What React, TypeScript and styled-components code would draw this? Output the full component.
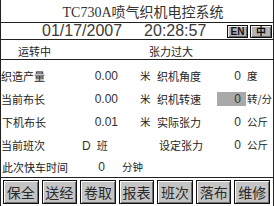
import React from 'react';
import styled, { createGlobalStyle } from 'styled-components';

const Global = createGlobalStyle`
  html, body { margin: 0; padding: 0; background: #fff; }
  body { font-family: "Liberation Sans", "Noto Sans CJK SC", sans-serif; }
`;

const Screen = styled.div`
  width: 274px;
  height: 206px;
  box-sizing: border-box;
  border-left: 1px solid #222;
  border-right: 1px solid #222;
  display: flex;
  flex-direction: column;
  overflow: hidden;
  color: #222;
  background: #fff;
`;

const TitleBar = styled.div`
  height: 22px;
  flex: none;
  border-bottom: 1px solid #222;
  display: flex;
  align-items: center;
  justify-content: center;
  padding-left: 12px;
  font-family: "Liberation Serif", "Noto Sans CJK SC", serif;
  font-size: 14px;
  font-weight: normal;
  color: #333;
`;

const DateRow = styled.div`
  height: 16px;
  flex: none;
  border-bottom: 1px solid #222;
  display: flex;
  align-items: center;
  padding-left: 41px;
  padding-right: 1px;
`;

const Clock = styled.span<{ $gap?: number }>`
  font-family: "Liberation Sans", sans-serif;
  font-size: 16px;
  line-height: 16px;
  color: #3a3a3a;
  margin-left: ${p => p.$gap ?? 0}px;
`;

const LangGroup = styled.div`
  margin-left: auto;
  display: flex;
  gap: 2px;
`;

const LangButton = styled.button<{ $w: number }>`
  width: ${p => p.$w}px;
  height: 13px;
  padding: 0;
  border: 1px solid #111;
  background: #b4b4b4;
  box-shadow: inset 1px 1px 0 #eee, inset -1px -1px 0 #666;
  font-family: "Liberation Sans", "Noto Sans CJK SC", sans-serif;
  font-size: 10px;
  font-weight: bold;
  line-height: 11px;
  color: #111;
  display: flex;
  align-items: center;
  justify-content: center;
`;

const StatusRow = styled.div`
  height: 17px;
  padding-top: 2px;
  flex: none;
  border-bottom: 1px solid #222;
  display: grid;
  grid-template-columns: 131px 1fr;
  align-items: center;
  padding-left: 17px;
  font-family: "Noto Sans CJK SC", sans-serif;
  font-size: 11px;
`;

const DataArea = styled.div`
  padding-top: 4px;
  flex: none;
  display: flex;
  flex-direction: column;
`;

const Row = styled.div<{ $h?: number }>`
  height: ${p => p.$h ?? 23}px;
  display: grid;
  grid-template-columns: 77px 40px 39px 60px 29px 1fr;
  align-items: center;
  font-family: "Noto Sans CJK SC", sans-serif;
  font-size: 11px;
  color: #222;
  white-space: nowrap;
`;

const Label = styled.span<{ $indent?: number }>`
  padding-left: ${p => p.$indent ?? 0}px;
`;

const Value = styled.span<{ $align?: 'left' | 'right'; $pad?: number; $hl?: boolean }>`
  font-family: "Liberation Sans", "Noto Sans CJK SC", sans-serif;
  font-size: 12px;
  line-height: 14px;
  height: 14px;
  color: #333;
  text-align: ${p => p.$align ?? 'right'};
  padding-${p => (p.$align === 'left' ? 'left' : 'right')}: ${p => p.$pad ?? 0}px;
  background: ${p => (p.$hl ? '#a9a9a9' : 'transparent')};
`;

const Unit = styled.span<{ $pad?: number }>`
  padding-left: ${p => p.$pad ?? 1}px;
  font-family: "Noto Sans CJK SC", sans-serif;
  font-size: 10.5px;
`;

const Inline = styled.span<{ $gap: number }>`
  margin-left: ${p => p.$gap}px;
  font-family: "Noto Sans CJK SC", sans-serif;
  font-size: 11px;
`;

const Toolbar = styled.div`
  flex: 1;
  border-top: 1px solid #222;
  display: flex;
  gap: 3px;
  padding: 2px 3px 2px 2px;
`;

const KeyButton = styled.button`
  flex: 1;
  height: 24px;
  padding: 0;
  border: 1px solid #111;
  background: #c4c4c4;
  box-shadow: inset 1px 1px 0 #fafafa, inset -1px -1px 0 #707070;
  font-family: "Noto Sans CJK SC", sans-serif;
  font-size: 14px;
  line-height: 20px;
  color: #2a2a2a;
  display: flex;
  align-items: center;
  justify-content: center;
`;

const keys = ['保全', '送经', '卷取', '报表', '班次', '落布', '维修'];

export default function App() {
  return (
    <>
      <Global />
      <Screen>
        <TitleBar>TC730A喷气织机电控系统</TitleBar>
        <DateRow>
          <Clock>01/17/2007</Clock>
          <Clock $gap={22}>20:28:57</Clock>
          <LangGroup>
            <LangButton $w={21}>EN</LangButton>
            <LangButton $w={22}>中</LangButton>
          </LangGroup>
        </DateRow>
        <StatusRow>
          <span>运转中</span>
          <span>张力过大</span>
        </StatusRow>
        <DataArea>
          <Row>
            <Label>织造产量</Label>
            <Value>0.00</Value>
            <Unit $pad={22}>米</Unit>
            <Label>织机角度</Label>
            <Value $pad={5}>0</Value>
            <Unit>度</Unit>
          </Row>
          <Row>
            <Label>当前布长</Label>
            <Value>0.00</Value>
            <Unit $pad={22}>米</Unit>
            <Label>织机转速</Label>
            <Value $pad={5} $hl>0</Value>
            <Unit>转/分</Unit>
          </Row>
          <Row>
            <Label $indent={1}>下机布长</Label>
            <Value>0.01</Value>
            <Unit $pad={22}>米</Unit>
            <Label>实际张力</Label>
            <Value $pad={5}>0</Value>
            <Unit>公斤</Unit>
          </Row>
          <Row>
            <Label>当前班次</Label>
            <Value $align="left" $pad={4}>
              D<Inline $gap={6}>班</Inline>
            </Value>
            <span />
            <Label $indent={2}>设定张力</Label>
            <Value $pad={5}>0</Value>
            <Unit>公斤</Unit>
          </Row>
          <Row $h={21}>
            <Label $indent={1}>此次快车时间</Label>
            <Value $pad={13}>0</Value>
            <Unit $pad={4}>分钟</Unit>
          </Row>
        </DataArea>
        <Toolbar>
          {keys.map(k => (
            <KeyButton key={k}>{k}</KeyButton>
          ))}
        </Toolbar>
      </Screen>
    </>
  );
}
